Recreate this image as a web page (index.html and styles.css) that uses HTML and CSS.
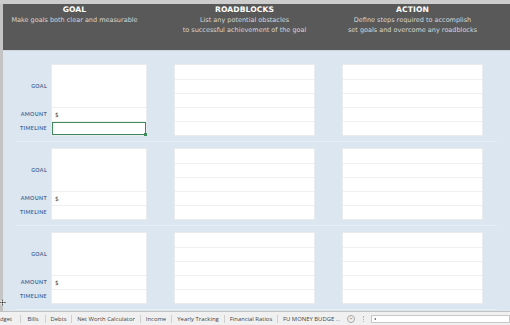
FILE: index.html
```html
<!DOCTYPE html>
<html>
<head>
<meta charset="utf-8">
<link rel="stylesheet" href="styles.css">
</head>
<body>
<div class="topstrip"></div>
<div class="frame">
  <div class="gutter"></div>
  <div class="area">
    <div class="header">
      <div class="hcol">
        <div class="htitle">GOAL</div>
        <div class="hsub">Make goals both clear and measurable</div>
      </div>
      <div class="hcol">
        <div class="htitle">ROADBLOCKS</div>
        <div class="hsub">List any potential obstacles<br>to successful achievement of the goal</div>
      </div>
      <div class="hcol">
        <div class="htitle">ACTION</div>
        <div class="hsub">Define steps required to accomplish<br>set goals and overcome any roadblocks</div>
      </div>
    </div>
    <div class="hline"></div>
    <div class="sheet">
      <div class="section">
        <div class="labels"><span>GOAL</span><span>AMOUNT</span><span>TIMELINE</span></div>
        <div class="goalbox"><div class="cell"></div><div class="cell">$</div><div class="cell selected"></div></div>
        <div class="rbox"><div></div><div></div><div></div><div></div><div></div></div>
        <div class="rbox"><div></div><div></div><div></div><div></div><div></div></div>
      </div>
      <div class="sep"></div>
      <div class="section">
        <div class="labels"><span>GOAL</span><span>AMOUNT</span><span>TIMELINE</span></div>
        <div class="goalbox"><div class="cell"></div><div class="cell">$</div><div class="cell"></div></div>
        <div class="rbox"><div></div><div></div><div></div><div></div><div></div></div>
        <div class="rbox"><div></div><div></div><div></div><div></div><div></div></div>
      </div>
      <div class="sep"></div>
      <div class="section">
        <div class="labels"><span>GOAL</span><span>AMOUNT</span><span>TIMELINE</span></div>
        <div class="goalbox"><div class="cell"></div><div class="cell">$</div><div class="cell"></div></div>
        <div class="rbox"><div></div><div></div><div></div><div></div><div></div></div>
        <div class="rbox"><div></div><div></div><div></div><div></div><div></div></div>
      </div>
      <div class="sep last"></div>
    </div>
  </div>
</div>
<div class="tabbar">
  <div class="tab first">dget</div>
  <div class="tab w24">Bills</div>
  <div class="tab w25">Debts</div>
  <div class="tab w68">Net Worth Calculator</div>
  <div class="tab w30">Income</div>
  <div class="tab w52">Yearly Tracking</div>
  <div class="tab w52">Financial Ratios</div>
  <div class="tab fu">FU MONEY BUDGE <span class="dots">...</span></div>
  <div class="plus">+</div>
  <div class="vdots"></div>
  <div class="scroll"><span class="sarrow"></span></div>
</div>
<svg class="cursor" width="7" height="7" viewBox="0 0 7 7"><path d="M3.5 0 L5 1.5 H4 V3 H5.5 V2 L7 3.5 L5.5 5 V4 H4 V5.5 H5 L3.5 7 L2 5.5 H3 V4 H1.5 V5 L0 3.5 L1.5 2 V3 H3 V1.5 H2 Z" fill="#222" stroke="#fff" stroke-width="0.6"/></svg>
</body>
</html>
```
FILE: styles.css
```css
html, body {
  margin: 0;
  padding: 0;
}
body {
  width: 510px;
  height: 325px;
  overflow: hidden;
  background: #c9c9c9;
  font-family: "Lato", "Open Sans", sans-serif;
  position: relative;
}
.topstrip {
  height: 4px;
  background: #cdcdcd;
}
.frame {
  display: flex;
  height: 307px;
}
.gutter {
  width: 3px;
  background: #c4c4c4;
}
.area {
  flex: 1;
  display: flex;
  flex-direction: column;
  background: #dce6f0;
}
.header {
  background: #595959;
  display: grid;
  grid-template-columns: 143px 139px 139px;
  column-gap: 29px;
  padding-top: 1px;
  box-sizing: border-box;
  height: 46px;
}
.hcol {
  text-align: center;
}
.htitle {
  color: #ffffff;
  font-family: "DejaVu Sans", "Lato", sans-serif;
  font-weight: 700;
  font-size: 7.6px;
  line-height: 10px;
  letter-spacing: 0.1px;
}
.hsub {
  color: #d6d6d6;
  font-family: "DejaVu Sans", "Lato", sans-serif;
  font-size: 6.5px;
  line-height: 10px;
  margin-top: 0px;
}
.hline {
  height: 1px;
  background: #cfd6dd;
}
.sheet {
  padding-top: 14px;
  height: 259px;
  box-sizing: border-box;
}
.section {
  display: flex;
  height: 70px;
}
.labels {
  width: 49px;
  display: grid;
  grid-template-rows: 42px 14px 14px;
  align-items: center;
  justify-items: end;
  padding-right: 5px;
  box-sizing: border-box;
}
.labels span {
  font-size: 5.3px;
  font-weight: 700;
  color: #4a6794;
  letter-spacing: 0.35px;
}
.goalbox {
  width: 94px;
  display: grid;
  grid-template-rows: 42px 14px 14px;
  background: #fff;
  box-shadow: 0 0 0 1px #e9ecef;
}
.cell {
  border-top: 1px solid #efefef;
  font-size: 6px;
  color: #444;
  display: flex;
  align-items: center;
  padding-left: 3px;
  position: relative;
}
.cell:first-child {
  border-top: none;
}
.cell.selected {
  box-shadow: inset 0 0 0 1px #3f8a5a;
}
.cell.selected::after {
  content: "";
  position: absolute;
  right: -1px;
  bottom: -1px;
  width: 3px;
  height: 3px;
  background: #3f8a5a;
}
.rbox {
  width: 139px;
  margin-left: 29px;
  display: grid;
  grid-template-rows: repeat(5, 14px);
  background: #fff;
  box-shadow: 0 0 0 1px #e9ecef;
}
.rbox div {
  border-top: 1px solid #efefef;
}
.rbox div:first-child {
  border-top: none;
}
.sep {
  height: 1px;
  background: #e6edf4;
  margin: 6px 0 7px 13px;
  width: 481px;
}
.sep.last {
  margin-bottom: 0;
}
.tabbar {
  height: 14px;
  border-top: 1px solid #c2c2c2;
  background: #f0f0f0;
  display: flex;
  align-items: center;
  font-family: "Open Sans", "Liberation Sans", sans-serif;
  font-size: 5.9px;
  color: #454545;
  box-sizing: border-box;
}
.tab {
  height: 8px;
  line-height: 8px;
  text-align: center;
  border-left: 1px solid #cfcfcf;
  white-space: nowrap;
  overflow: hidden;
  flex: none;
}
.tab.first {
  width: 20px;
  border-left: none;
  text-align: left;
}
.w24 { width: 24px; }
.w25 { width: 25px; }
.w68 { width: 68px; }
.w30 { width: 30px; }
.w52 { width: 52px; }
.tab.fu {
  width: 68px;
  text-align: left;
  padding-left: 5px;
  box-sizing: border-box;
}
.dots {
  color: #777;
}
.plus {
  width: 6px;
  height: 6px;
  border: 1px solid #a9a9a9;
  border-radius: 50%;
  font-size: 6px;
  line-height: 6px;
  text-align: center;
  color: #999;
  margin-left: 2px;
  flex: none;
}
.vdots {
  width: 1px;
  height: 6px;
  margin-left: 8px;
  border-left: 1px dotted #b5b5b5;
  flex: none;
}
.scroll {
  margin-left: 6px;
  flex: 1;
  height: 8px;
  background: #fff;
  border: 1px solid #c8c8c8;
  box-sizing: border-box;
  display: flex;
  align-items: center;
}
.sarrow {
  width: 0;
  height: 0;
  margin-left: 2px;
  border-top: 1.5px solid transparent;
  border-bottom: 1.5px solid transparent;
  border-right: 2px solid #555;
}
.cursor {
  position: absolute;
  left: -1px;
  top: 299px;
}
```
